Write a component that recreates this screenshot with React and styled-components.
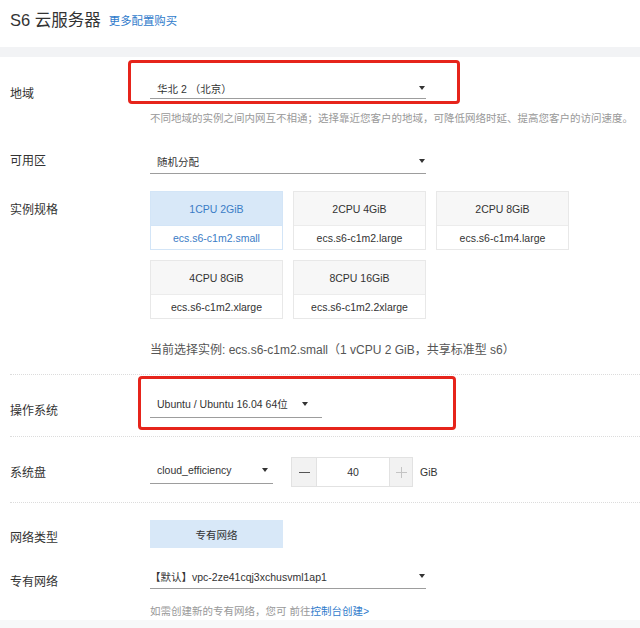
import React from "react";
import styled, { createGlobalStyle } from "styled-components";

const Global = createGlobalStyle`
  html, body { margin: 0; padding: 0; background: #fff; }
  body { font-family: "Liberation Sans", "Noto Sans CJK SC", sans-serif; color: #333; }
  * { box-sizing: border-box; }
`;

const Page = styled.div`
  width: 640px;
  height: 628px;
  overflow: hidden;
  display: flex;
  flex-direction: column;
  background: #fff;
`;

const Header = styled.div`
  height: 47px;
  padding: 0 0 7px 10px;
  display: flex;
  align-items: center;
  gap: 8px;
`;

const Title = styled.div`
  font-size: 16.5px;
  color: #333;
  line-height: 20px;
`;

const TitleLink = styled.a`
  font-size: 11.4px;
  color: #2f7bcb;
  text-decoration: none;
  line-height: 16px;
  margin-top: 1px;
`;

const Band = styled.div`
  height: ${(p) => p.h}px;
  margin-top: ${(p) => p.mt || 0}px;
  background: ${(p) => p.bg || "#f2f3f5"};
  flex: ${(p) => (p.grow ? "1" : "none")};
`;

const Row = styled.div`
  display: grid;
  grid-template-columns: 150px 1fr;
  align-items: start;
  margin-top: ${(p) => p.mt || 0}px;
`;

const Label = styled.div`
  padding-left: 10px;
  padding-top: ${(p) => p.pt || 0}px;
  font-size: 12px;
  line-height: 17px;
  color: #333;
`;

const Content = styled.div`
  display: flex;
  flex-direction: column;
  align-items: flex-start;
  padding-top: ${(p) => p.pt || 0}px;
`;

const Highlight = styled.div`
  width: ${(p) => p.w}px;
  margin-left: ${(p) => p.ml}px;
  border: 3px solid #e6241b;
  border-radius: 4px;
  padding: ${(p) => p.pad};
`;

const SelectBox = styled.div`
  width: ${(p) => p.w}px;
  height: ${(p) => p.h + 1}px;
  border-bottom: 1px solid #9d9d9d;
  display: flex;
  align-items: center;
  padding-left: ${(p) => (p.pl === undefined ? 7 : p.pl)}px;
  padding-right: ${(p) => p.pr}px;
  font-size: 10.5px;
  color: #333;
`;

const SelectText = styled.span`
  flex: 1;
  white-space: nowrap;
`;

const Caret = styled.span`
  width: 0;
  height: 0;
  border-left: 3px solid transparent;
  border-right: 3px solid transparent;
  border-top: 4px solid #333;
`;

const Hint = styled.div`
  margin-top: ${(p) => p.mt}px;
  font-size: 10.5px;
  line-height: 16px;
  color: #999;
  white-space: nowrap;
`;

const HintLink = styled.a`
  color: #2f7bcb;
  text-decoration: none;
`;

const CardGrid = styled.div`
  display: grid;
  grid-template-columns: repeat(3, 133px);
  gap: 10px;
`;

const Card = styled.div`
  border: 1px solid ${(p) => (p.active ? "#d3e5f7" : "#e8e8e8")};
  display: flex;
  flex-direction: column;
  font-size: 10.5px;
  color: ${(p) => (p.active ? "#3a7cc6" : "#333")};
`;

const CardHead = styled.div`
  height: 34px;
  border-bottom: 1px solid ${(p) => (p.active ? "#d3e5f7" : "#ececec")};
  background: ${(p) => (p.active ? "#d8e8f8" : "#f7f7f7")};
  display: flex;
  align-items: center;
  justify-content: center;
`;

const CardFoot = styled.div`
  height: 23px;
  background: #fff;
  display: flex;
  align-items: center;
  justify-content: center;
`;

const Current = styled.div`
  margin-top: 22px;
  font-size: 12px;
  line-height: 18px;
  color: #555;
  white-space: nowrap;
`;

const Divider = styled.div`
  margin: ${(p) => p.mt}px 0 0 10px;
  border-top: 1px dotted #dcdcdc;
`;

const Inline = styled.div`
  display: flex;
  align-items: flex-start;
`;

const Stepper = styled.div`
  display: flex;
  height: 30px;
  margin-left: 18px;
  margin-top: 1px;
`;

const StepBtn = styled.div`
  width: ${(p) => p.w}px;
  height: 30px;
  background: #f2f2f2;
  border: 1px solid #e2e2e2;
  display: flex;
  align-items: center;
  justify-content: center;
`;

const StepInput = styled.div`
  width: 72px;
  height: 30px;
  border-top: 1px solid #e2e2e2;
  border-bottom: 1px solid #e2e2e2;
  display: flex;
  align-items: center;
  justify-content: center;
  font-size: 10.5px;
  color: #333;
`;

const Unit = styled.div`
  margin-left: 7px;
  height: 30px;
  display: flex;
  align-items: center;
  font-size: 10.5px;
  color: #333;
`;

const ToggleBtn = styled.div`
  width: 133px;
  height: 28px;
  background: #d8e8f8;
  display: flex;
  align-items: center;
  justify-content: center;
  font-size: 10.5px;
  color: #333;
`;

const Select = ({ w, h, pr, pl, children }) => (
  <SelectBox w={w} h={h} pr={pr} pl={pl}>
    <SelectText>{children}</SelectText>
    <Caret />
  </SelectBox>
);

const specs = [
  { head: "1CPU 2GiB", foot: "ecs.s6-c1m2.small", active: true },
  { head: "2CPU 4GiB", foot: "ecs.s6-c1m2.large" },
  { head: "2CPU 8GiB", foot: "ecs.s6-c1m4.large" },
  { head: "4CPU 8GiB", foot: "ecs.s6-c1m2.xlarge" },
  { head: "8CPU 16GiB", foot: "ecs.s6-c1m2.2xlarge" },
];

const MinusIcon = () => (
  <svg width="11" height="11" viewBox="0 0 11 11">
    <path d="M0 5.5H11" stroke="#555" strokeWidth="1" />
  </svg>
);

const PlusIcon = () => (
  <svg width="11" height="11" viewBox="0 0 11 11">
    <path d="M0 5.5H11M5.5 0V11" stroke="#c4c4c4" strokeWidth="1" />
  </svg>
);

export default function App() {
  return (
    <Page>
      <Global />
      <Header>
        <Title>S6 云服务器</Title>
        <TitleLink href="#">更多配置购买</TitleLink>
      </Header>
      <Band h={10} />

      <Row mt={3}>
        <Label pt={26}>地域</Label>
        <Content>
          <Highlight w={332} ml={-22} pad="15px 0 2px 19px">
            <Select w={276} h={20} pr={1}>华北 2 （北京）</Select>
          </Highlight>
          <Hint mt={6}>
            不同地域的实例之间内网互不相通；选择靠近您客户的地域，可降低网络时延、提高您客户的访问速度。
          </Hint>
        </Content>
      </Row>

      <Row mt={23}>
        <Label pt={4}>可用区</Label>
        <Content>
          <Select w={276} h={24} pr={1}>随机分配</Select>
        </Content>
      </Row>

      <Row mt={17}>
        <Label pt={11}>实例规格</Label>
        <Content>
          <CardGrid>
            {specs.map((s) => (
              <Card key={s.foot} active={s.active}>
                <CardHead active={s.active}>{s.head}</CardHead>
                <CardFoot>{s.foot}</CardFoot>
              </Card>
            ))}
          </CardGrid>
          <Current>
            当前选择实例: ecs.s6-c1m2.small（1 vCPU 2 GiB，共享标准型 s6）
          </Current>
        </Content>
      </Row>

      <Divider mt={15} />

      <Row mt={1}>
        <Label pt={27}>操作系统</Label>
        <Content>
          <Highlight w={318} ml={-12} pad="11px 0 9px 9px">
            <Select w={172} h={27} pr={14}>Ubuntu / Ubuntu 16.04 64位</Select>
          </Highlight>
        </Content>
      </Row>

      <Divider mt={6} />

      <Row>
        <Label pt={28}>系统盘</Label>
        <Content pt={19}>
          <Inline>
            <Select w={123} h={27} pr={5}>cloud_efficiency</Select>
            <Stepper>
              <StepBtn w={26}><MinusIcon /></StepBtn>
              <StepInput>40</StepInput>
              <StepBtn w={24}><PlusIcon /></StepBtn>
              <Unit>GiB</Unit>
            </Stepper>
          </Inline>
        </Content>
      </Row>

      <Divider mt={15} />

      <Row mt={17}>
        <Label pt={10}>网络类型</Label>
        <Content>
          <ToggleBtn>专有网络</ToggleBtn>
        </Content>
      </Row>

      <Row mt={16}>
        <Label pt={10}>专有网络</Label>
        <Content>
          <Select w={276} h={24} pr={1} pl={0}>【默认】vpc-2ze41cqj3xchusvml1ap1</Select>
          <Hint mt={14}>
            如需创建新的专有网络，您可 前往<HintLink href="#">控制台创建&gt;</HintLink>
          </Hint>
        </Content>
      </Row>

      <Band h={10} grow mt={1} bg="#f7f8f9" />
    </Page>
  );
}
